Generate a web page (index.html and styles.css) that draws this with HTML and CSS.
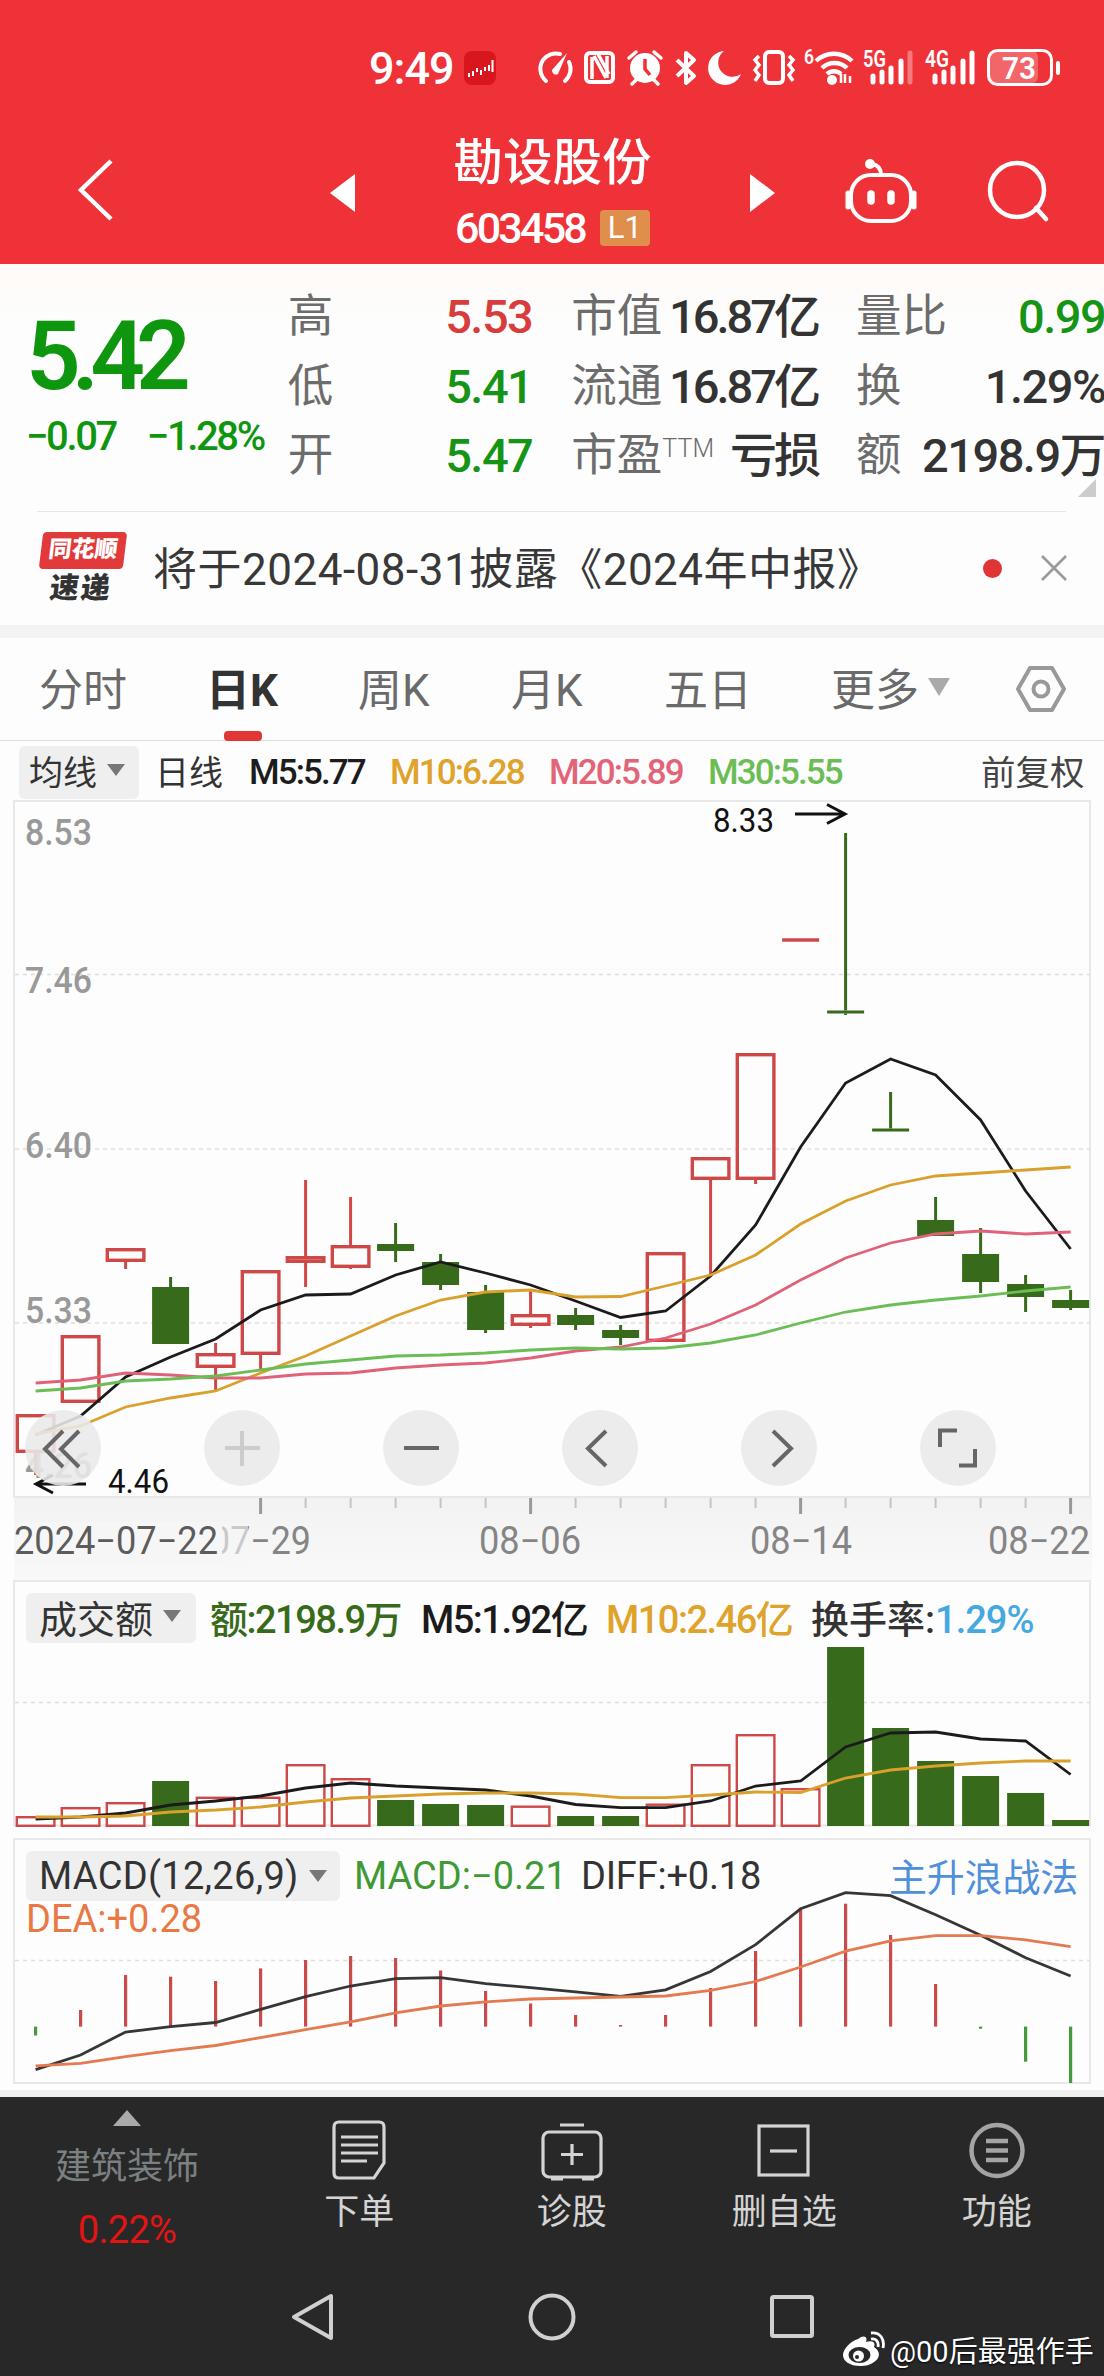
FILE: index.html
```html
<!DOCTYPE html>
<html lang="zh-CN">
<head>
  <meta charset="UTF-8">
  <title>勘设股份 603458</title>
  <link rel="stylesheet" href="styles.css">
</head>
<body>

  <header class="header">
    <div class="status">
      <span class="clock">9:49</span>
      <svg class="app-icon" width="32" height="34" viewBox="0 0 32 34">
        <rect width="32" height="34" rx="8" fill="#d8161d"/>
        <path d="M5 22v4M9 20v5M13 17v4M17 19v5M21 16v4M25 14v6M28.500 9v12" stroke="#fff" stroke-width="2"/>
      </svg>
      <!-- icones da barra de status -->
      <svg class="status-icons" width="530" height="44" viewBox="534 46 530 44" fill="none" stroke="#fff" stroke-width="4">
        <path d="M546 81a16 16 0 0 1-3-21a16 16 0 0 1 17-6M569 62a16 16 0 0 1-4 19" stroke-linecap="round"/>
        <path d="M567 53l-9 21a4 4 0 0 1-6-4z" fill="#fff" stroke="none"/>
        <rect x="586" y="53" width="27" height="29" rx="4" stroke-width="4"/>
        <path d="M592 57v22M594 56l12 22M598 54l11 20M607 56v22" stroke-width="3.500"/>
        <circle cx="645" cy="68" r="15" fill="#fff" stroke="none"/>
        <path d="M629 58l7-6M661 58l-7-6M636 80l-4 4M654 80l4 4" stroke-linecap="round" stroke-width="3.500"/>
        <path d="M645 59v10l5 6" stroke="#ee3237" stroke-width="3.500"/>
        <path d="M677 60l17 16-8 7V53l8 7-17 16" stroke-width="4" stroke-linejoin="round"/>
        <path d="M724 51a17 17 0 1 0 17 23a14 14 0 0 1-17-23z" fill="#fff" stroke="none"/>
        <rect x="765" y="52" width="18" height="31" rx="4"/>
        <path d="M759 56l-4 4 4 5-4 5 4 5-4 6M789 56l4 4-4 5 4 5-4 5 4 6" stroke-width="3.500"/>
        <path d="M816 61a26 26 0 0 1 36 0M822 68a18 18 0 0 1 25 0M827 74a10 10 0 0 1 14 0" stroke-width="4.500"/>
        <circle cx="832" cy="80" r="5" fill="#fff" stroke="none"/>
        <path d="M841 74v9M845 83v-9M850 83v-7" stroke-width="2.500"/>
        <path d="M873 76v6M882 72v10M891 68v14M901 61v21" stroke-width="5" stroke-linecap="round"/>
        <path d="M910 53v29" stroke-width="5" stroke-linecap="round" opacity=".35"/>
        <path d="M935 76v6M944 72v10M953 68v14M963 61v21M972 53v29" stroke-width="5" stroke-linecap="round"/>
        <rect x="989" y="51" width="49" height="32" rx="6" fill="#fff" stroke="none" opacity=".25"/>
        <rect x="988.500" y="50.500" width="63" height="34" rx="9" stroke-width="3"/>
        <path d="M1058 63v10" stroke-width="4" stroke-linecap="round"/>
        <g class="status-text">
          <text x="804" y="64" font-size="20" textLength="10" lengthAdjust="spacingAndGlyphs">6</text>
          <text x="863" y="67" font-size="23" textLength="23" lengthAdjust="spacingAndGlyphs">5G</text>
          <text x="925" y="67" font-size="23" textLength="24" lengthAdjust="spacingAndGlyphs">4G</text>
          <text x="1002" y="79" font-size="32" textLength="34" lengthAdjust="spacingAndGlyphs">73</text>
        </g>
      </svg>
    </div>

    <div class="titlebar">
      <svg class="back" width="44" height="70" viewBox="0 0 44 70"><path d="M38 6L8 35l30 29" fill="none" stroke="#fff" stroke-width="4.500"/></svg>
      <svg class="prev" width="25" height="38" viewBox="0 0 25 38"><path d="M25 0v38L0 19z" fill="#fff"/></svg>
      <div class="stock">
        <div class="stock-name">勘设股份</div>
        <div class="stock-code">603458 <span class="badge">L1</span></div>
      </div>
      <svg class="next" width="25" height="38" viewBox="0 0 25 38"><path d="M0 0v38l25-19z" fill="#fff"/></svg>
      <svg class="robot" width="72" height="66" viewBox="0 0 72 66" fill="none" stroke="#fff" stroke-width="4">
        <rect x="6" y="17" width="60" height="46" rx="20"/>
        <path d="M36 17c0-7-3-10-9-11"/>
        <circle cx="25" cy="6" r="5" fill="#fff" stroke="none"/>
        <path d="M3 35v14M69 35v14" stroke-width="5" stroke-linecap="round"/>
        <path d="M26 36v7M46 36v7" stroke-width="7.500" stroke-linecap="round"/>
      </svg>
      <svg class="search" width="64" height="64" viewBox="0 0 64 64" fill="none" stroke="#fff" stroke-width="4.500">
        <circle cx="31" cy="31" r="27"/><path d="M50 49l10 11" stroke-linecap="round"/>
      </svg>
    </div>
  </header>

  <section class="quote">
    <div class="price-box">
      <div class="price">5.42</div>
      <div class="change"><span>−0.07</span><span>−1.28%</span></div>
    </div>
    <dl class="col col1">
      <dt>高</dt><dd class="up">5.53</dd>
      <dt>低</dt><dd class="down">5.41</dd>
      <dt>开</dt><dd class="down">5.47</dd>
    </dl>
    <dl class="col col2">
      <dt>市值</dt><dd>16.87亿</dd>
      <dt>流通</dt><dd>16.87亿</dd>
      <dt>市盈<sup>TTM</sup></dt><dd>亏损</dd>
    </dl>
    <dl class="col col3">
      <dt>量比</dt><dd class="down">0.99</dd>
      <dt>换</dt><dd>1.29%</dd>
      <dt>额</dt><dd>2198.9万</dd>
    </dl>
    <i class="corner"></i>
  </section>

  <section class="news">
    <div class="news-logo">
      <div class="logo-top">同花顺</div>
      <div class="logo-bottom">速递</div>
    </div>
    <div class="news-text">将于2024-08-31披露《2024年中报》</div>
    <i class="dot"></i>
    <svg class="close" width="26" height="26" viewBox="0 0 26 26"><path d="M1 1l24 24M25 1L1 25" stroke="#999" stroke-width="2.600"/></svg>
  </section>

  <nav class="tabs">
    <a>分时</a>
    <a class="active">日K</a>
    <a>周K</a>
    <a>月K</a>
    <a>五日</a>
    <a>更多<i class="caret"></i></a>
    <svg width="50" height="48" viewBox="0 0 50 48" fill="none" stroke="#999" stroke-width="4">
      <path d="M14 3h22l12 21-12 21H14L2 24z" stroke-linejoin="round"/><circle cx="25" cy="24" r="7.500"/>
    </svg>
  </nav>

  <div class="ma-row">
    <span class="chip">均线<i class="caret"></i></span>
    <span class="ma-name">日线</span>
    <span class="ma black">M5:5.77</span>
    <span class="ma orange">M10:6.28</span>
    <span class="ma pink">M20:5.89</span>
    <span class="ma green">M30:5.55</span>
    <span class="fq">前复权</span>
  </div>

  <div class="panel kline">
    <svg id="kline" width="1104" height="780" viewBox="0 800 1104 780"></svg>
    <div class="tools">
      <button><svg viewBox="0 0 76 76"><path d="M38 21L20 39l18 18M54 21L36 39l18 18"/></svg></button>
      <button class="off"><svg viewBox="0 0 76 76"><path d="M21 38h35M38 21v35"/></svg></button>
      <button><svg viewBox="0 0 76 76"><path d="M21 38h35"/></svg></button>
      <button><svg viewBox="0 0 76 76"><path d="M44 21L26 38.500l18 17.500"/></svg></button>
      <button><svg viewBox="0 0 76 76"><path d="M32 21l18 17.500L32 56"/></svg></button>
      <button><svg viewBox="0 0 76 76"><path d="M20 37V20.500h17M39 55.500h16V39"/></svg></button>
    </div>
  </div>

  <div class="panel volume">
    <svg id="volume" width="1104" height="258" viewBox="0 1580 1104 258"></svg>
    <div class="legend">
      <span class="chip">成交额<i class="caret"></i></span>
      <span class="l1">额:2198.9万</span>
      <span class="l2">M5:1.92亿</span>
      <span class="l3">M10:2.46亿</span>
      <span class="l4">换手率:<b>1.29%</b></span>
    </div>
  </div>

  <div class="panel macd">
    <svg id="macd" width="1104" height="259" viewBox="0 1838 1104 259"></svg>
    <div class="legend">
      <span class="chip">MACD(12,26,9)<i class="caret"></i></span>
      <span class="m1">MACD:−0.21</span>
      <span class="m2">DIFF:+0.18</span>
      <a class="m4">主升浪战法</a>
    </div>
    <div class="dea">DEA:+0.28</div>
  </div>

  <footer class="footer">
    <div class="toolbar">
      <div class="sector">
        <i class="tri-up"></i>
        <div class="sector-name">建筑装饰</div>
        <div class="sector-pct">0.22%</div>
      </div>
      <div class="item">
        <svg width="64" height="62" viewBox="0 0 64 62"><path d="M12 3h40q5 0 5 5v36L47 59H12q-5 0-5-5V8q0-5 5-5z"/><path d="M14 18h37M14 26h37M14 34h37M14 42h26"/></svg>
        下单
      </div>
      <div class="item">
        <svg width="64" height="62" viewBox="0 0 64 62"><rect x="3" y="13" width="58" height="45" rx="6"/><path d="M20 6h24M32 25v21M21 35.500h22M11 60h12M42 60h12"/></svg>
        诊股
      </div>
      <div class="item">
        <svg width="64" height="62" viewBox="0 0 64 62"><rect x="7" y="7" width="49" height="49"/><path d="M18 32h27"/></svg>
        删自选
      </div>
      <div class="item">
        <svg class="dim" width="64" height="62" viewBox="0 0 64 62"><circle cx="32" cy="31.500" r="25.500"/><path d="M21 22h22M21 31.500h22M21 41h22"/></svg>
        功能
      </div>
    </div>
    <div class="sysnav">
      <svg width="46" height="50" viewBox="0 0 46 50"><path d="M41 4v42L4 25z" stroke-linejoin="round"/></svg>
      <svg width="48" height="50" viewBox="0 0 48 50"><circle cx="24" cy="25" r="21.500"/></svg>
      <svg width="46" height="50" viewBox="0 0 46 50"><rect x="3" y="5" width="40" height="39" rx="1.500"/></svg>
    </div>
    <div class="watermark">
      <svg width="42" height="36" viewBox="0 0 42 36">
        <path d="M15 8c6-5 10-2 8 3 6-2 10 0 8 5 12 8 0 19-13 19C6 35 0 30 0 24 0 18 8 10 15 8z" fill="#fff"/>
        <ellipse cx="16.500" cy="24" rx="11" ry="8" fill="#282828"/>
        <circle cx="15.500" cy="25" r="5.500" fill="#fff"/><circle cx="14" cy="26" r="2" fill="#282828"/>
        <path d="M28 8c5-1 8 3 7 8M28 2c9-1 14 6 12 15" fill="none" stroke="#fff" stroke-width="2.800"/>
      </svg>
      <span>@00后最强作手</span>
    </div>
  </footer>

  <script>
    var X0 = 35.6, STEP = 45;
    var RED = '#cf4848', GREEN = '#376b1b';

    // tipo, topo do corpo, base do corpo, maxima, minima
    var candles = [
      ['r', 1414, 1453, 1414, 1475], ['r', 1335, 1403, 1335, 1403], ['r', 1248, 1262, 1248, 1269],
      ['g', 1287, 1344, 1277, 1344], ['r', 1353, 1368, 1343, 1392], ['r', 1270, 1355, 1270, 1370],
      ['r', 1256, 1263, 1180, 1287], ['r', 1245, 1268, 1197, 1269], ['g', 1244, 1251, 1223, 1262],
      ['g', 1262, 1285, 1254, 1290], ['g', 1292, 1330, 1285, 1333], ['r', 1314, 1326, 1291, 1328],
      ['g', 1315, 1325, 1308, 1330], ['g', 1330, 1338, 1325, 1345], ['r', 1252, 1342, 1252, 1342],
      ['r', 1157, 1180, 1157, 1275], ['r', 1053, 1180, 1053, 1184], ['r', 938, 942, 938, 942],
      ['g', 1010.500, 1013.500, 833, 1015], ['g', 1128.500, 1131.500, 1092, 1131], ['g', 1220, 1236, 1197, 1236],
      ['g', 1254, 1282, 1228, 1293], ['g', 1284, 1297, 1275, 1312], ['g', 1300, 1308, 1290, 1310]
    ];
    var ma5 = [1435, 1416, 1377, 1357, 1339, 1310, 1295, 1294, 1275, 1262, 1273, 1285, 1301, 1317.5, 1311, 1276, 1225, 1147, 1083, 1059, 1075, 1120, 1191, 1249];
    var ma10 = [1434, 1426, 1407, 1398, 1391, 1373, 1356, 1336, 1316, 1300, 1292, 1290, 1297, 1296.5, 1286, 1275, 1255, 1224, 1201, 1185, 1176, 1173, 1170, 1167];
    var ma20 = [1383, 1380, 1373, 1375, 1378, 1378, 1374, 1373, 1368, 1365, 1363, 1358, 1351, 1347, 1338, 1324, 1305, 1280, 1258, 1243, 1234, 1231, 1234, 1232];
    var ma30 = [1391, 1388, 1381, 1379, 1376, 1370, 1364, 1360, 1356, 1355, 1353, 1350, 1348, 1349, 1348, 1343, 1335, 1323, 1312, 1305, 1300, 1296, 1291, 1287];

    var vol = [1816, 1807, 1802, 1781, 1796.6, 1796.6, 1764, 1778, 1800, 1804, 1805, 1805.5, 1816, 1816, 1803.5, 1764, 1734, 1788, 1647, 1728, 1761, 1776, 1793, 1820];
    var vol5 = [1819, 1817, 1813, 1805, 1801, 1796, 1788, 1783, 1786, 1788, 1790, 1796, 1804.5, 1807.6, 1807.6, 1801, 1786, 1781, 1747, 1733, 1732, 1739, 1741, 1774.5];
    var vol10 = [1817, 1817, 1816, 1812, 1810, 1807, 1802, 1798, 1796, 1794, 1793, 1793, 1794, 1797.6, 1797.6, 1795, 1792, 1792.5, 1778, 1770, 1766, 1763, 1761, 1761];

    var hist = [2035.5, 2010, 1975, 1976.7, 1981, 1968.4, 1960, 1956, 1958, 1970.5, 1991, 2003.5, 2015, 2025, 2015, 1988, 1951, 1909.5, 1903.7, 1935, 1984, 2028.7, 2061.7, 2083];
    var diff = [2069.6, 2055, 2032, 2026.6, 2022.5, 2009.4, 1996.6, 1986, 1978.7, 1977.7, 1983.6, 1987.7, 1991.8, 1996.3, 1989.8, 1971.5, 1944.6, 1908.8, 1892.6, 1895.7, 1914.7, 1935.3, 1957.7, 1976];
    var dea = [2065.9, 2063.4, 2056.6, 2050.7, 2045.5, 2037.6, 2029.7, 2021.8, 2012.8, 2006, 2001.8, 1999, 1998, 1997, 1996, 1990.4, 1981.5, 1967, 1951.2, 1940.9, 1935.7, 1935.7, 1939.8, 1946.7];

    function cx(i) { return X0 + STEP * i; }
    function rect(x, y, w, h, attrs) {
      return '<rect x="' + x + '" y="' + y + '" width="' + w + '" height="' + h + '" ' + attrs + '/>';
    }
    function seg(x1, y1, x2, y2, color, w, extra) {
      return '<path d="M' + x1 + ' ' + y1 + 'L' + x2 + ' ' + y2 + '" stroke="' + color + '" stroke-width="' + w + '" ' + (extra || '') + '/>';
    }
    function curve(ys, color) {
      var pts = ys.map(function (y, i) { return cx(i) + ',' + y; }).join(' ');
      return '<polyline points="' + pts + '" fill="none" stroke="' + color + '" stroke-width="2.800"/>';
    }
    function text(s, x, y, len, cls) {
      return '<text x="' + x + '" y="' + y + '" textLength="' + len + '" lengthAdjust="spacingAndGlyphs" class="' + cls + '">' + s + '</text>';
    }
    function grid(y) { return seg(15, y, 1090, y, '#dedede', 1.5, 'stroke-dasharray="4 4"'); }
    function frame(y, h) { return rect(14, y, 1076, h, 'fill="#fdfdfd" stroke="#e8e8e8" stroke-width="2"'); }
    function bar(i, top, bottom, kind, sw) {
      var x = cx(i);
      if (kind === 'g') return rect(x - 18.5, top, 37, bottom - top, 'fill="' + GREEN + '"');
      return rect(x - 20 + sw / 2, top + sw / 2, 40 - sw, bottom - top - sw, 'fill="none" stroke="' + RED + '" stroke-width="' + sw + '"');
    }

    function drawKline() {
      var s = '<defs><linearGradient id="ax" x2="0" y2="1"><stop offset="0" stop-color="#f2f2f2"/><stop offset="1" stop-color="#f9f9f9"/></linearGradient></defs>';
      s += rect(14, 1497, 1078, 84, 'fill="url(#ax)"') + frame(801, 696) + grid(974.6) + grid(1149) + grid(1323);
      s += text('8.53', 25, 845, 67, 'ylab') + text('7.46', 25, 993, 67, 'ylab') + text('6.40', 25, 1158, 67, 'ylab') + text('5.33', 25, 1323, 67, 'ylab') + text('4.26', 25, 1478, 67, 'ylab');
      candles.forEach(function (c, i) {
        var x = cx(i), color = c[0] === 'r' ? RED : GREEN;
        if (c[3] < c[1]) s += seg(x, c[3], x, c[1], color, 3);
        if (c[4] > c[2]) s += seg(x, c[2], x, c[4], color, 3);
        if (i === 17) s += seg(x - 18.5, 940, x + 18.5, 940, RED, 3.5);
        else s += bar(i, c[1], c[2], c[0], 3.4);
      });
      s += curve(ma5, '#1b1b1b') + curve(ma10, '#daa02c') + curve(ma20, '#e06278') + curve(ma30, '#6bbd55');
      s += '<path d="M795 814h50M827 804.500l18 9.500-18 9.500M86 1484H37M53 1475l-17 9 17 9" fill="none" stroke="#111" stroke-width="3"/>';
      s += text('8.33', 713, 832, 61, 'mark') + text('4.46', 108, 1493, 61, 'mark');
      for (var i = 5; i < 24; i++) {
        if (i % 6 === 5) s += seg(cx(i), 1498, cx(i), 1514, '#999', 3);
        else s += seg(cx(i), 1498, cx(i), 1508, '#c4c4c4', 2);
      }
      s += text('07−29', 210, 1554, 101, 'date');
      s += rect(14, 1522, 208, 40, 'fill="#f6f6f6"') + rect(222, 1522, 26, 40, 'fill="#f6f6f6" opacity=".6"');
      s += text('2024−07−22', 14, 1554, 204, 'date dark');
      s += text('08−06', 479, 1554, 102, 'date') + text('08−14', 750, 1554, 102, 'date') + text('08−22', 988, 1554, 102, 'date');
      document.getElementById('kline').innerHTML = s;
    }

    function drawVolume() {
      var s = frame(1581, 244.5) + grid(1702.5);
      vol.forEach(function (y, i) { s += bar(i, y, candles[i][0] === 'r' ? 1827 : 1826, candles[i][0], 2.4); });
      s += curve(vol5, '#1b1b1b') + curve(vol10, '#daa02c');
      document.getElementById('volume').innerHTML = s;
    }

    function drawMacd() {
      var zero = 2026.6, s = frame(1839, 244) + grid(1960.5);
      hist.forEach(function (y, i) { s += seg(cx(i), zero, cx(i), y, y < zero ? '#c94a4a' : '#459a3b', 3.2); });
      s += curve(diff, '#363636') + curve(dea, '#e37a50');
      s += rect(0, 2090, 1104, 7, 'fill="#efefef"');
      document.getElementById('macd').innerHTML = s;
    }

    drawKline();
    drawVolume();
    drawMacd();
  </script>

</body>
</html>
```
FILE: styles.css
```css
* { box-sizing: border-box; }
body {
  margin: 0;
  width: 1104px;
  height: 2376px;
  background: #fdfdfd;
  color: #333;
  font-family: Roboto, "Noto Sans CJK SC", sans-serif;
  white-space: nowrap;
  overflow: hidden;
}
svg { display: block; flex: none; }
i { display: block; }
a { color: inherit; }

.header { height: 264px; background: #ee3237; color: #fff; }
.status { display: flex; height: 110px; padding: 46px 0 0 369px; }
.clock { width: 95px; font-size: 45px; line-height: 45px; font-weight: 500; letter-spacing: -1px; }
.app-icon { margin-top: 5px; }
.status-icons { margin-left: 38px; }
.status-text { fill: #fff; stroke: none; font-weight: 600; }
.titlebar { display: flex; height: 154px; padding-left: 73px; }
.back { margin-top: 45px; }
.prev { margin: 64px 0 0 213px; }
.stock { width: 395px; text-align: center; padding-top: 20px; }
.stock-name { font-size: 49.5px; line-height: 66px; font-weight: 500; }
.stock-code { display: flex; justify-content: center; align-items: center; font-size: 43px; line-height: 65px; height: 64px; font-weight: 500; letter-spacing: -2.8px; }
.badge { width: 50px; height: 36px; margin-left: 15px; border-radius: 4px; background: #e08e4c; font-size: 31px; line-height: 36px; font-weight: 400; letter-spacing: 0; }
.next { margin-top: 64px; }
.robot { margin: 48px 0 0 70px; }
.search { margin: 49px 0 0 69px; }

.quote { position: relative; display: flex; height: 247px; padding-top: 17px; background: linear-gradient(#fefaf7, #fdfdfd 60px); }
.price-box { width: 288px; padding-left: 26px; color: #0f960f; }
.price { height: 120px; padding-top: 19px; font-size: 96px; line-height: 112px; font-weight: 600; letter-spacing: -9px; }
.change { display: flex; gap: 31px; padding-top: 11px; font-size: 40px; line-height: 50px; font-weight: 500; letter-spacing: -2.4px; }
.col { display: grid; grid-template-columns: 66px 1fr; grid-auto-rows: 69.5px; margin: 1px 0 0; font-size: 45.5px; line-height: 69.5px; }
.col dt { color: #6c6c6c; }
.col dd { margin: 0; text-align: right; font-weight: 500; font-size: 47px; letter-spacing: -1.5px; }
.col sup { font-size: 25px; line-height: 0; vertical-align: 14px; font-weight: 300; }
.col1 { width: 245px; }
.col2 { width: 247px; margin-left: 39px; }
.col2 dd { letter-spacing: -3px; }
.col3 { width: 248px; margin-left: 38px; }
.up { color: #d93c3c; }
.down { color: #169416; }
.corner { position: absolute; right: 8px; top: 215px; border-left: 18px solid transparent; border-bottom: 18px solid #ccc; }

.news { position: relative; display: flex; align-items: center; height: 114px; padding-left: 39px; }
.news::before { content: ""; position: absolute; left: 37px; right: 38px; top: 0; height: 1px; background: #e6e6e6; }
.news-logo { width: 114px; }
.logo-top { width: 84px; height: 37px; margin-left: 2px; background: #e23a3a; border-radius: 4px; color: #fff; font-size: 23px; line-height: 36px; font-weight: 900; text-align: center; transform: skewX(-7deg); }
.logo-bottom { width: 84px; height: 36px; padding-top: 3px; font-size: 29px; line-height: 33px; font-weight: 900; letter-spacing: 2px; text-align: center; transform: skewX(-7deg); color: #333; }
.news-text { width: 830px; padding-bottom: 4px; font-size: 44px; letter-spacing: .5px; color: #383838; }
.dot { width: 19px; height: 19px; border-radius: 50%; background: #e03535; }
.close { margin-left: 39px; }

.tabs { position: relative; display: flex; height: 116px; padding: 0 0 0 39px; align-items: center; border-top: 13px solid #f3f3f3; border-bottom: 1px solid #dedede; font-size: 44px; color: #6a6a6a; }
.tabs a { width: 153px; padding-bottom: 5px; }
.tabs a:nth-child(1) { width: 167px; }
.tabs a:nth-child(6) { display: flex; align-items: center; width: 193px; margin-left: 14px; }
.tabs svg { margin-left: -8px; }
.tabs .active { position: relative; width: 152px; font-weight: 700; color: #333; }
.tabs .active::after { content: ""; position: absolute; left: 18px; bottom: -17px; width: 38px; height: 10px; border-radius: 4px; background: #e23636; }
.caret { border: 9px solid transparent; border-top: 12px solid #777; border-bottom: 0; margin-left: 10px; }
.tabs .caret { border-width: 18px 11.5px 0; border-top-color: #aaa; margin-left: 9px; }

.ma-row { display: flex; align-items: center; height: 46px; padding: 16px 0 0 19px; font-size: 34px; }
.chip { display: flex; align-items: center; background: #efefef; border-radius: 6px; color: #333; }
.ma-row .chip { width: 120px; height: 53px; padding: 0 0 4px 10px; margin-right: 16px; }
.ma-name { width: 94px; padding-bottom: 4px; }
.ma { width: 141px; font-size: 35px; font-weight: 500; letter-spacing: -1.9px; }
.ma + .ma { width: 159px; }
.black { color: #1c1c1c; }
.orange { color: #dfa32c; }
.pink { color: #e36478; }
.green { color: #6cbd55; }
.fq { margin-left: 114px; padding-bottom: 4px; font-size: 34.5px; color: #444; }

.panel { position: relative; }
.kline { height: 780px; margin-top: 13px; }
.ylab { font-size: 37px; font-weight: 500; fill: #999; }
.mark { font-size: 33px; fill: #111; }
.date { font-size: 38px; font-weight: 400; fill: #858585; }
.dark { fill: #5c5c5c; }
.tools { position: absolute; left: 25px; top: 610px; display: flex; gap: 103px; }
.tools button { width: 76px; height: 76px; padding: 0; border: 0; border-radius: 50%; background: rgba(233, 233, 233, .88); }
.tools path { fill: none; stroke: #666; stroke-width: 4; }
.tools .off path { stroke: #ccc; }

.volume { height: 258px; }
.macd { height: 259px; }
.legend { position: absolute; left: 26px; top: 13px; display: flex; align-items: center; height: 50px; font-size: 38px; width: 1078px; font-weight: 500; letter-spacing: -1.5px; }
.volume .legend span { padding-bottom: 4px; }
.legend .chip { height: 50px; padding-left: 13px; font-weight: 400; letter-spacing: 0; }
.volume .chip { width: 170px; margin-right: 14px; }
.legend b { font-weight: 500; color: #45a9df; letter-spacing: -1px; }
.l1 { width: 211px; color: #376b1b; }
.l2 { width: 185px; color: #1b1b1b; }
.l3 { width: 205px; color: #dfa32c; }
.l4 { letter-spacing: 0; }
.macd .chip { width: 314px; margin-right: 14px; letter-spacing: .3px; }
.m1 { width: 227px; color: #3f9a35; font-weight: 400; letter-spacing: 0; }
.m2 { width: 308px; font-weight: 400; letter-spacing: -.2px; }
.m4 { color: #4f8fdb; padding-bottom: 4px; letter-spacing: -.2px; font-weight: 400; }
.dea { position: absolute; left: 26px; top: 57px; font-size: 38px; line-height: 48px; color: #e97844; }

.footer { position: relative; height: 279px; background: #282828; color: #d4d4d4; }
.toolbar { display: flex; height: 170px; font-size: 35px; line-height: 50px; }
.sector { width: 254px; text-align: center; }
.tri-up { width: 0; margin: 13px auto 0; border: 14.5px solid transparent; border-bottom: 16px solid #aaa; border-top: 0; }
.sector-name { margin-top: 16px; color: #7b8082; font-size: 36px; }
.sector-pct { margin-top: 13px; color: #e31414; font-size: 38px; letter-spacing: -.7px; }
.item { width: 212.5px; text-align: center; padding-top: 22px; }
.item:nth-child(2) { margin-left: -1px; }
.item svg { margin: 0 auto 7px; fill: none; stroke: #d4d4d4; stroke-width: 3.2; }
.item .dim { stroke: #a4a4a4; stroke-width: 4.5; }
.sysnav { display: flex; padding: 25px 0 0 290px; }
.sysnav svg { fill: none; stroke: #d0d0d0; stroke-width: 4; }
.sysnav svg + svg { margin-left: 192px; }
.sysnav svg + svg + svg { margin-left: 193px; }
.watermark { position: absolute; left: 843px; bottom: 6px; display: flex; align-items: center; gap: 5px; color: #fff; font-size: 29px; text-shadow: 0 1px 2px #000; }
```
